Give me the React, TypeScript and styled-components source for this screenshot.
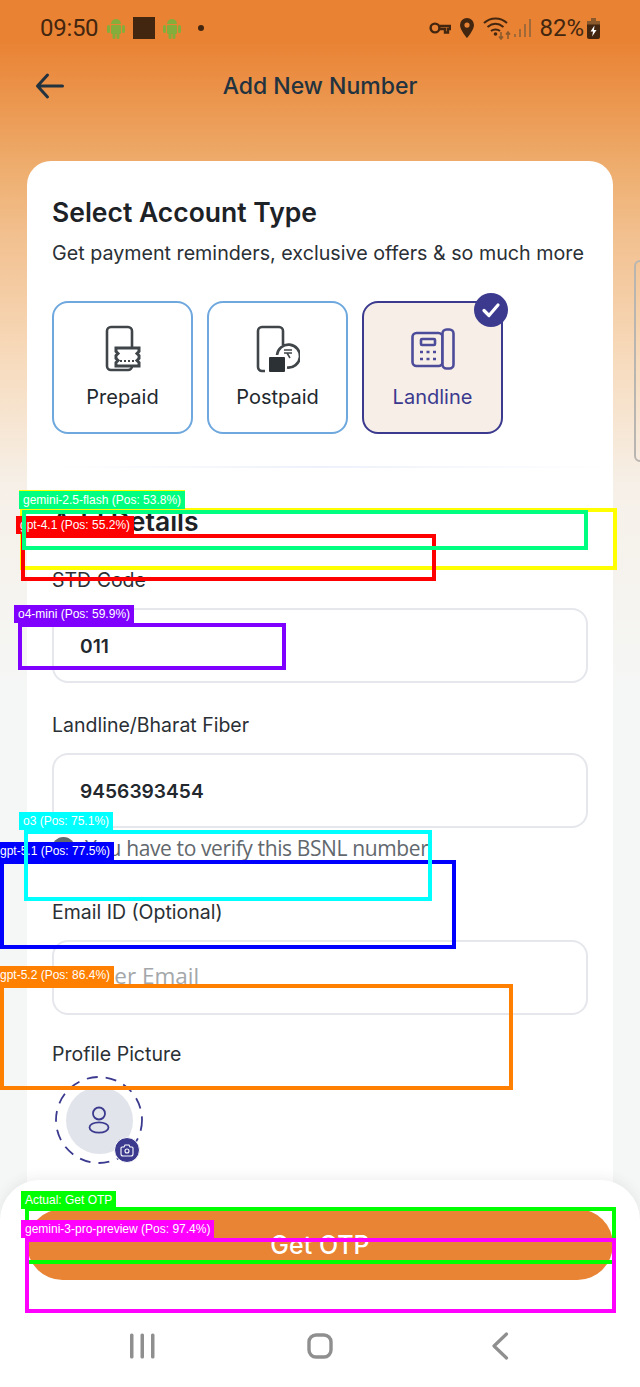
import React from "react";
import styled, { createGlobalStyle } from "styled-components";

const Global = createGlobalStyle`
  html, body { margin: 0; padding: 0; background: #f5f7f6; }
  #root { width: 640px; height: 1387px; }
`;

const Page = styled.div`
  position: relative;
  width: 640px;
  height: 1387px;
  overflow: hidden;
  display: flex;
  flex-direction: column;
  align-items: center;
  background: linear-gradient(180deg, #e98233 0%, #e98233 3%, #eeae6f 12.3%, #f2c08f 17%, #f7dbbd 26%, #f6f0e8 35%, #f5f7f6 50%);
  font-family: "Inter", "Liberation Sans", sans-serif;
  color: #22282d;
`;

const StatusBar = styled.div`
  width: 100%;
  height: 56px;
  box-sizing: border-box;
  padding: 0 40px;
  display: flex;
  align-items: center;
  justify-content: space-between;
  font-family: "Roboto", sans-serif;
  font-size: 24px;
  color: #43260f;
`;

const StatusGroup = styled.div`
  display: flex;
  align-items: center;
`;

const Clock = styled.span`
  margin-right: 9px;
  letter-spacing: -0.3px;
`;

const Square = styled.span`
  width: 22px;
  height: 22px;
  margin: 0 8px;
  background: #43260f;
`;

const Dot = styled.span`
  width: 6px;
  height: 6px;
  margin-left: 17px;
  border-radius: 50%;
  background: #43260f;
`;

const Percent = styled.span`
  margin: 0 3px 0 8px;
`;

const Header = styled.header`
  width: 100%;
  height: 60px;
  position: relative;
  display: flex;
  align-items: center;
  justify-content: center;
  font-size: 23px;
  font-weight: 500;
  color: #22323f;
`;

const BackIcon = styled.svg`
  position: absolute;
  left: 34px;
  top: 14px;
`;

const Card = styled.main`
  width: 586px;
  height: 1040px;
  margin-top: 45px;
  box-sizing: border-box;
  padding: 34px 25px 0;
  background: #fff;
  border-radius: 24px 24px 0 0;
  flex-shrink: 0;
`;

const Title = styled.h2`
  margin: 0;
  font-size: 26.5px;
  line-height: 34px;
  font-weight: 600;
  color: #1d2226;
  white-space: nowrap;
`;

const Sub = styled.p`
  margin: 12px 0 0;
  font-size: 19.7px;
  line-height: 24px;
  color: #2a3035;
  white-space: nowrap;
`;

const Types = styled.div`
  display: flex;
  gap: 14px;
  margin-top: 36px;
`;

const TypeCard = styled.div<{ $active?: boolean }>`
  position: relative;
  width: 141px;
  height: 133px;
  box-sizing: border-box;
  padding-top: 22px;
  border-radius: 16px;
  display: flex;
  flex-direction: column;
  align-items: center;
  gap: 11px;
  border: 2px solid ${(p) => (p.$active ? "#3b3a8f" : "#6fa8de")};
  background: ${(p) => (p.$active ? "#f6eee7" : "#fff")};
  color: ${(p) => (p.$active ? "#3b3a8f" : "#22282d")};
  font-size: 20px;
  line-height: 26px;
`;

const Check = styled.span`
  position: absolute;
  right: -7px;
  top: -10px;
  width: 34px;
  height: 34px;
  border-radius: 50%;
  background: #3b3a8f;
  display: flex;
  align-items: center;
  justify-content: center;
`;

const Divider = styled.div`
  height: 2px;
  margin: 32px -25px 0;
  background: linear-gradient(90deg, #fff 5%, #eef1fa 50%, #fff 100%);
`;

const SectionTitle = styled.h2`
  margin: 36px 0 0;
  font-size: 26.5px;
  line-height: 34px;
  font-weight: 600;
  color: #1d2226;
`;

const Label = styled.div<{ $top: number }>`
  margin-top: ${(p) => p.$top}px;
  font-size: 19.5px;
  line-height: 26px;
  color: #2a3035;
`;

const Field = styled.div<{ $top: number; $muted?: boolean }>`
  height: 75px;
  margin-top: ${(p) => p.$top}px;
  box-sizing: border-box;
  padding-left: 26px;
  padding-bottom: ${(p) => (p.$muted ? 4 : 0)}px;
  display: flex;
  align-items: center;
  border: 2px solid #e5e7ec;
  border-radius: 16px;
  font-size: ${(p) => (p.$muted ? 22.5 : 19.2)}px;
  font-weight: ${(p) => (p.$muted ? 400 : 600)};
  font-family: ${(p) => (p.$muted ? '"Open Sans", sans-serif' : "inherit")};
  color: ${(p) => (p.$muted ? "#a4a7aa" : "#22282d")};
`;

const Verify = styled.div`
  margin-top: 5px;
  height: 30px;
  display: flex;
  align-items: center;
  gap: 10px;
  font-family: "Open Sans", sans-serif;
  font-size: 21px;
  letter-spacing: -0.38px;
  color: #62686d;
  white-space: nowrap;
`;

const VerifyBadge = styled.span`
  width: 23px;
  height: 23px;
  border-radius: 50%;
  background: #62686d;
  flex-shrink: 0;
`;

const Avatar = styled.div`
  position: relative;
  width: 90px;
  height: 90px;
  margin: 8px 0 0 2px;
  display: flex;
  align-items: center;
  justify-content: center;
`;

const AvatarInner = styled.div`
  width: 67px;
  height: 67px;
  border-radius: 50%;
  background: #e1e4ea;
  display: flex;
  align-items: center;
  justify-content: center;
`;

const Ring = styled.svg`
  position: absolute;
  inset: 0;
`;

const Camera = styled.span`
  position: absolute;
  right: 4px;
  bottom: 2px;
  width: 24px;
  height: 24px;
  border-radius: 50%;
  background: #3b3a8f;
  border: 1px solid #fff;
  display: flex;
  align-items: center;
  justify-content: center;
`;

const Sheet = styled.footer`
  position: absolute;
  left: 0;
  right: 0;
  bottom: 0;
  height: 207px;
  box-sizing: border-box;
  padding: 29px 27px 0;
  background: #fff;
  border-radius: 40px 40px 0 0;
  box-shadow: 0 -3px 12px rgba(60, 60, 60, 0.08);
`;

const OtpButton = styled.div`
  height: 71px;
  border-radius: 36px;
  background: #e88434;
  color: #fff;
  display: flex;
  align-items: center;
  justify-content: center;
  font-size: 25px;
  font-weight: 500;
`;

const NavBar = styled.nav`
  display: flex;
  justify-content: space-between;
  align-items: center;
  padding: 0 103px;
  margin-top: 48px;
  height: 36px;
`;

const EdgeTab = styled.div`
  position: absolute;
  right: -8px;
  top: 260px;
  width: 10px;
  height: 198px;
  border: 2px solid #b9b5b0;
  border-radius: 6px;
`;

const Marker = styled.div<{ $c: string }>`
  position: absolute;
  box-sizing: border-box;
  border: 4px solid ${(p) => p.$c};
`;

const MarkerTag = styled.span<{ $c: string }>`
  position: absolute;
  height: 18px;
  padding: 0 4px;
  background: ${(p) => p.$c};
  color: #fff;
  font-family: "Liberation Sans", sans-serif;
  font-size: 12px;
  line-height: 18px;
  white-space: nowrap;
`;

const markers = [
  { c: "#ffff00", x: 20, y: 508, w: 597, h: 62, t: "\u00a0", tx: 19, ty: 490, tw: 158 },
  { c: "#ff0000", x: 21, y: 534, w: 415, h: 47, t: "gpt-4.1 (Pos: 55.2%)", tx: 16, ty: 516 },
  { c: "#00ff80", x: 22, y: 510, w: 566, h: 40, t: "gemini-2.5-flash (Pos: 53.8%)", tx: 19, ty: 491 },
  { c: "#8000ff", x: 18, y: 623, w: 268, h: 47, t: "o4-mini (Pos: 59.9%)", tx: 14, ty: 605 },
  { c: "#0000ff", x: 0, y: 860, w: 456, h: 89, t: "gpt-5.1 (Pos: 77.5%)", tx: -4, ty: 842 },
  { c: "#00ffff", x: 24, y: 830, w: 408, h: 71, t: "o3 (Pos: 75.1%)", tx: 19, ty: 812 },
  { c: "#ff8000", x: 0, y: 984, w: 513, h: 106, t: "gpt-5.2 (Pos: 86.4%)", tx: -4, ty: 966 },
  { c: "#00ff00", x: 25, y: 1207, w: 591, h: 57, t: "Actual: Get OTP", tx: 21, ty: 1191 },
  { c: "#ff00ff", x: 25, y: 1238, w: 591, h: 75, t: "gemini-3-pro-preview (Pos: 97.4%)", tx: 21, ty: 1220 },
];

const Robot = () => (
  <svg width="18" height="22" viewBox="0 0 18 22" fill="#84ad3c">
    <path d="M4 7a5 5 0 0 1 10 0z" />
    <rect x="4" y="8" width="10" height="9" rx="1" />
    <rect x="0" y="8" width="3" height="8" rx="1.5" />
    <rect x="15" y="8" width="3" height="8" rx="1.5" />
    <rect x="5.5" y="16" width="3" height="6" rx="1.5" />
    <rect x="9.5" y="16" width="3" height="6" rx="1.5" />
  </svg>
);

export default function App() {
  return (
    <Page>
      <Global />
      <StatusBar>
        <StatusGroup>
          <Clock>09:50</Clock>
          <Robot />
          <Square />
          <Robot />
          <Dot />
        </StatusGroup>
        <StatusGroup>
          <svg width="22" height="14" viewBox="0 0 22 14" fill="none" stroke="#43260f" strokeWidth="2.4">
            <circle cx="6" cy="7" r="4.4" />
            <path d="M10.500 5h10.500v3h-2v3.500h-3v-3.500h-5.500" />
          </svg>
          <svg width="16" height="22" viewBox="0 0 16 22" style={{ marginLeft: 8 }}>
            <path fillRule="evenodd" fill="#43260f" d="M8 1a7 7 0 0 1 7 7c0 5-7 13-7 13S1 13 1 8a7 7 0 0 1 7-7zm0 4.500a2.600 2.600 0 1 0 0 5.200 2.600 2.600 0 0 0 0-5.200z" />
          </svg>
          <svg width="28" height="24" viewBox="0 0 28 24" fill="none" style={{ marginLeft: 8 }}>
            <path d="M1 7c6.500-6 16.500-6 23 0M4.500 11c5-4 11-4 16 0M8 15c2.500-2 6.500-2 9 0" stroke="#43260f" strokeWidth="2" />
            <circle cx="12.500" cy="18" r="1.800" fill="#43260f" />
            <path d="M18 16v7m-2-2.500 2 2.500 2-2.500M25 23v-7m-2 2.500 2-2.500 2 2.500" stroke="#8a5a2d" strokeWidth="1.600" />
          </svg>
          <svg width="17" height="19" viewBox="0 0 17 19" fill="#a0693a" style={{ marginLeft: 3 }}>
            <rect x="0" y="15" width="2" height="3" />
            <rect x="5" y="10" width="2" height="8" />
            <rect x="10" y="5" width="2" height="13" />
            <rect x="15" y="0" width="2" height="18" />
          </svg>
          <Percent>82%</Percent>
          <svg width="13" height="21" viewBox="0 0 13 21">
            <rect x="0" y="3" width="13" height="18" rx="2" fill="#43260f" />
            <rect x="4" y="0" width="5" height="3" fill="#8a5a2d" />
            <rect x="0" y="3" width="13" height="3.500" fill="#8a5a2d" />
            <path d="M7.500 7.500 3.500 13.500h2.500l-.8 5 4.300-6.500H7z" fill="#fff" />
          </svg>
        </StatusGroup>
      </StatusBar>
      <Header>
        Add New Number
        <BackIcon width="32" height="32" viewBox="0 0 32 32" fill="none" stroke="#22323f" strokeWidth="3" strokeLinecap="round" strokeLinejoin="round">
          <path d="M3.500 16h25M13.500 5 3.500 16l10 11" />
        </BackIcon>
      </Header>
      <Card>
        <Title>Select Account Type</Title>
        <Sub>Get payment reminders, exclusive offers &amp; so much more</Sub>
        <Types>
          <TypeCard>
            <svg width="36" height="48" viewBox="0 0 36 48" fill="none" stroke="#3f4549" strokeWidth="2.6">
              <path d="M27 24V6a4 4 0 0 0-4-4H6a4 4 0 0 0-4 4v35a4 4 0 0 0 4 4h17a4 4 0 0 0 4-4" />
              <path d="M11 23h23v3.500l-2 2 2 2v3l-2 2 2 2v3.500H11v-3.500l2-2-2-2v-3l2-2-2-2z" fill="#fff" strokeWidth="3" />
              <path d="M15 36h15" strokeDasharray="2 2" strokeWidth="2" />
            </svg>
            Prepaid
          </TypeCard>
          <TypeCard>
            <svg width="44" height="48" viewBox="0 0 44 48" fill="none" stroke="#3f4549" strokeWidth="2.6">
              <path d="M9 46H6a4 4 0 0 1-4-4V6a4 4 0 0 1 4-4h17a4 4 0 0 1 4 4v14" />
              <path d="M21 30a11.500 11.500 0 1 1 10 12.500" />
              <rect x="13" y="32" width="16" height="15" rx="1" fill="#2b3134" stroke="none" />
              <path d="M28 25h8m-8 3h8m-5 0 3 5" strokeWidth="1.500" />
            </svg>
            Postpaid
          </TypeCard>
          <TypeCard $active>
            <Check>
              <svg width="20" height="20" viewBox="0 0 20 20" fill="none" stroke="#fff" strokeWidth="3.2" strokeLinecap="round" strokeLinejoin="round">
                <path d="M3 10.500 8 15.500 17 5" />
              </svg>
            </Check>
            <svg width="44" height="42" viewBox="0 0 44 42" fill="none" stroke="#4d4c9a" strokeWidth="2.6" style={{ margin: "3px 0" }}>
              <rect x="1.500" y="5" width="30" height="33" rx="4" />
              <rect x="31.500" y="1.500" width="11" height="39" rx="4" fill="#f6eee7" />
              <rect x="10" y="11" width="14" height="6" rx="1" />
              <path d="M9 24h3m3.500 0h3m3.500 0h3M9 31h3m3.500 0h3m3.500 0h3" strokeDasharray="3 1" />
            </svg>
            Landline
          </TypeCard>
        </Types>
        <Divider />
        <SectionTitle>Add Details</SectionTitle>
        <Label $top={29}>STD Code</Label>
        <Field $top={15}>011</Field>
        <Label $top={29}>Landline/Bharat Fiber</Label>
        <Field $top={15}>9456393454</Field>
        <Verify>
          <VerifyBadge />
          You have to verify this BSNL number
        </Verify>
        <Label $top={36}>Email ID (Optional)</Label>
        <Field $top={15} $muted>Enter Email</Field>
        <Label $top={26}>Profile Picture</Label>
        <Avatar>
          <Ring width="90" height="90" viewBox="0 0 90 90" fill="none">
            <circle cx="45" cy="45" r="43" stroke="#3b3a8f" strokeWidth="1.8" strokeDasharray="11 8" />
          </Ring>
          <AvatarInner>
            <svg width="22" height="28" viewBox="0 0 22 28" fill="none" stroke="#3b3a8f" strokeWidth="1.8">
              <circle cx="11" cy="7.500" r="6" />
              <ellipse cx="11" cy="21.500" rx="9.500" ry="5.200" />
            </svg>
          </AvatarInner>
          <Camera>
            <svg width="14" height="14" viewBox="0 0 14 14" fill="none" stroke="#fff" strokeWidth="1.1">
              <path d="M1 5a1 1 0 0 1 1-1h2l1-2h4l1 2h2a1 1 0 0 1 1 1v6a2 2 0 0 1-2 2H3a2 2 0 0 1-2-2z" />
              <circle cx="7" cy="8" r="2" />
            </svg>
          </Camera>
        </Avatar>
      </Card>
      <EdgeTab />
      <Sheet>
        <OtpButton>Get OTP</OtpButton>
        <NavBar>
          <svg width="25" height="26" viewBox="0 0 25 26" fill="#8f8f8f">
            <rect x="0" y="0.500" width="3.500" height="25" rx="1.500" />
            <rect x="10.500" y="0.500" width="3.500" height="25" rx="1.500" />
            <rect x="21" y="0.500" width="3.500" height="25" rx="1.500" />
          </svg>
          <svg width="26" height="26" viewBox="0 0 26 26" fill="none" stroke="#8f8f8f" strokeWidth="3.4">
            <rect x="2" y="2" width="22" height="22" rx="7" />
          </svg>
          <svg width="26" height="28" viewBox="0 0 26 28" fill="none" stroke="#8f8f8f" strokeWidth="3.2" strokeLinecap="round" strokeLinejoin="round">
            <path d="M22.500 2 10 14l12.500 12" />
          </svg>
        </NavBar>
      </Sheet>
      {markers.map((m) => (
        <React.Fragment key={m.c}>
          <Marker $c={m.c} style={{ left: m.x, top: m.y, width: m.w, height: m.h }} />
          <MarkerTag $c={m.c} style={{ left: m.tx, top: m.ty, minWidth: m.tw }}>
            {m.t}
          </MarkerTag>
        </React.Fragment>
      ))}
    </Page>
  );
}
